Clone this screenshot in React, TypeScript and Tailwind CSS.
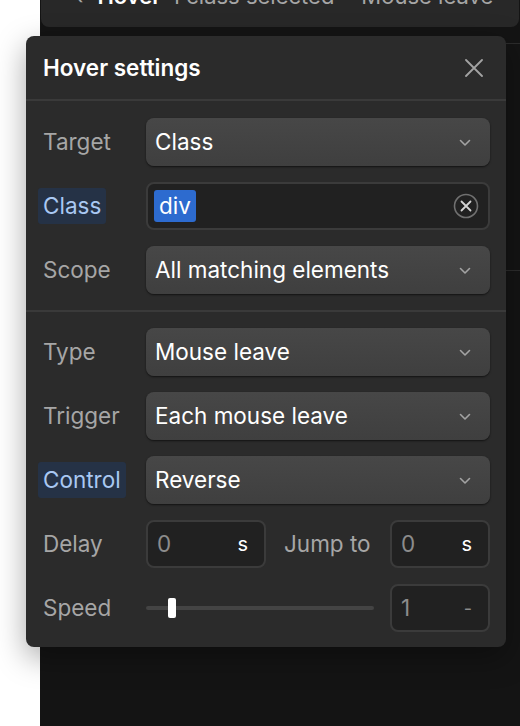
import type { ReactNode } from "react";

const font = { fontFamily: "Inter, 'Noto Sans', sans-serif" };

function Chevron() {
  return (
    <svg width="14" height="14" viewBox="0 0 14 14" fill="none" className="text-[#a3a3a3]">
      <path d="M2.5 5.5 7 10 11.5 5.5" stroke="currentColor" strokeWidth="1.6" strokeLinecap="round" strokeLinejoin="round" />
    </svg>
  );
}

function Select({ value }: { value: string }) {
  return (
    <div className="flex h-[48px] flex-1 items-center justify-between rounded-[8px] bg-gradient-to-b from-[#474747] to-[#3f3f3f] pl-[9px] pr-[18px] text-[22.5px] text-white shadow-[0_1px_2px_rgba(0,0,0,0.6)]">
      <span>{value}</span>
      <Chevron />
    </div>
  );
}

function Label({ children, active }: { children: ReactNode; active?: boolean }) {
  return (
    <div className="w-[103px] shrink-0">
      <span
        className={
          active
            ? "-ml-[5px] inline-block rounded-[3px] bg-[#253246] px-[5px] py-[2px] text-[22.5px] leading-[32px] text-[#a9c8f2]"
            : "text-[22.5px] text-[#a6a6a6]"
        }
      >
        {children}
      </span>
    </div>
  );
}

function Row({ label, active, children }: { label: string; active?: boolean; children: ReactNode }) {
  return (
    <div className="flex h-[48px] items-center">
      <Label active={active}>{label}</Label>
      {children}
    </div>
  );
}

function NumBox({ value, unit, w }: { value: string; unit: string; w: string }) {
  return (
    <div
      className={`${w} flex h-[48px] shrink-0 items-center justify-between rounded-[8px] border-2 border-[#3b3b3b] bg-[#212121] pl-[9px] pr-[16px] text-[22.5px]`}
    >
      <span className="text-[#8c8c8c]">{value}</span>
      <span className={unit === "-" ? "text-[18px] text-[#8c8c8c]" : "text-[20px] text-white"}>{unit}</span>
    </div>
  );
}

export default function App() {
  return (
    <div style={font} className="relative h-[726px] w-[520px] overflow-hidden bg-white">
      {/* underlying dark panel */}
      <div className="absolute bottom-0 left-[40px] right-0 top-0 bg-[#141414]">
        <div className="relative mx-[1px] h-[27px] overflow-hidden rounded-b-[8px] bg-[#282828]">
          <div className="absolute left-[34px] top-[-18px] flex items-center whitespace-nowrap text-[22px] leading-[28px]">
            <span className="text-[#a6a6a6]">‹</span>
            <span className="ml-[14px] font-semibold text-white">Hover</span>
            <span className="ml-[10px] text-[#a6a6a6]">1 class selected</span>
            <span className="ml-[27px] text-[#a6a6a6]">Mouse leave</span>
          </div>
        </div>
        <div className="mt-[16px] border-t border-[#2c2c2c]" />
        <div className="ml-[466px] mt-[226px] border-t border-[#2c2c2c]" />
      </div>

      {/* popup */}
      <div className="absolute left-[26px] top-[36px] h-[611px] w-[480px] rounded-[8px] bg-[#2b2b2b] shadow-[0_10px_30px_rgba(0,0,0,0.35)]">
        <div className="flex h-[65px] items-center justify-between border-b-2 border-[#3a3a3a] pl-[17px] pr-[23px]">
          <span className="text-[22.5px] font-semibold text-white">Hover settings</span>
          <svg width="18" height="18" viewBox="0 0 18 18" fill="none" className="text-[#a3a3a3]">
            <path d="M1 1 17 17M17 1 1 17" stroke="currentColor" strokeWidth="1.8" strokeLinecap="round" />
          </svg>
        </div>

        <div className="flex flex-col gap-[16px] pb-[16px] pl-[17px] pr-[16px] pt-[17px]">
          <Row label="Target">
            <Select value="Class" />
          </Row>
          <Row label="Class" active>
            <div className="flex h-[48px] flex-1 items-center justify-between rounded-[8px] border-2 border-[#3b3b3b] bg-[#212121] pl-[6px] pr-[9px]">
              <span className="rounded-[3px] bg-[#2d6bcf] px-[5px] text-[22.5px] leading-[32px] text-white">div</span>
              <svg width="26" height="26" viewBox="0 0 26 26" fill="none">
                <circle cx="13" cy="13" r="11.5" stroke="#707070" strokeWidth="1.6" />
                <path d="M8.5 8.5 17.5 17.5M17.5 8.5 8.5 17.5" stroke="#d4d4d4" strokeWidth="1.8" strokeLinecap="round" />
              </svg>
            </div>
          </Row>
          <Row label="Scope">
            <Select value="All matching elements" />
          </Row>
        </div>

        <div className="border-t-2 border-[#3a3a3a]" />

        <div className="flex flex-col gap-[16px] pb-[16px] pl-[17px] pr-[16px] pt-[16px]">
          <Row label="Type">
            <Select value="Mouse leave" />
          </Row>
          <Row label="Trigger">
            <Select value="Each mouse leave" />
          </Row>
          <Row label="Control" active>
            <Select value="Reverse" />
          </Row>
          <div className="flex h-[48px] items-center">
            <Label>Delay</Label>
            <NumBox value="0" unit="s" w="w-[120px]" />
            <span className="flex-1 pl-[18px] text-[22.5px] text-[#a6a6a6]">Jump to</span>
            <NumBox value="0" unit="s" w="w-[100px]" />
          </div>
          <div className="flex h-[48px] items-center">
            <Label>Speed</Label>
            <div className="relative mr-[16px] flex h-[24px] flex-1 items-center">
              <div className="h-[4px] w-full rounded-full bg-[#444444]" />
              <div className="absolute left-[22px] top-[2px] h-[20px] w-[8px] rounded-[2px] bg-white" />
            </div>
            <NumBox value="1" unit="-" w="w-[100px]" />
          </div>
        </div>
      </div>
    </div>
  );
}
